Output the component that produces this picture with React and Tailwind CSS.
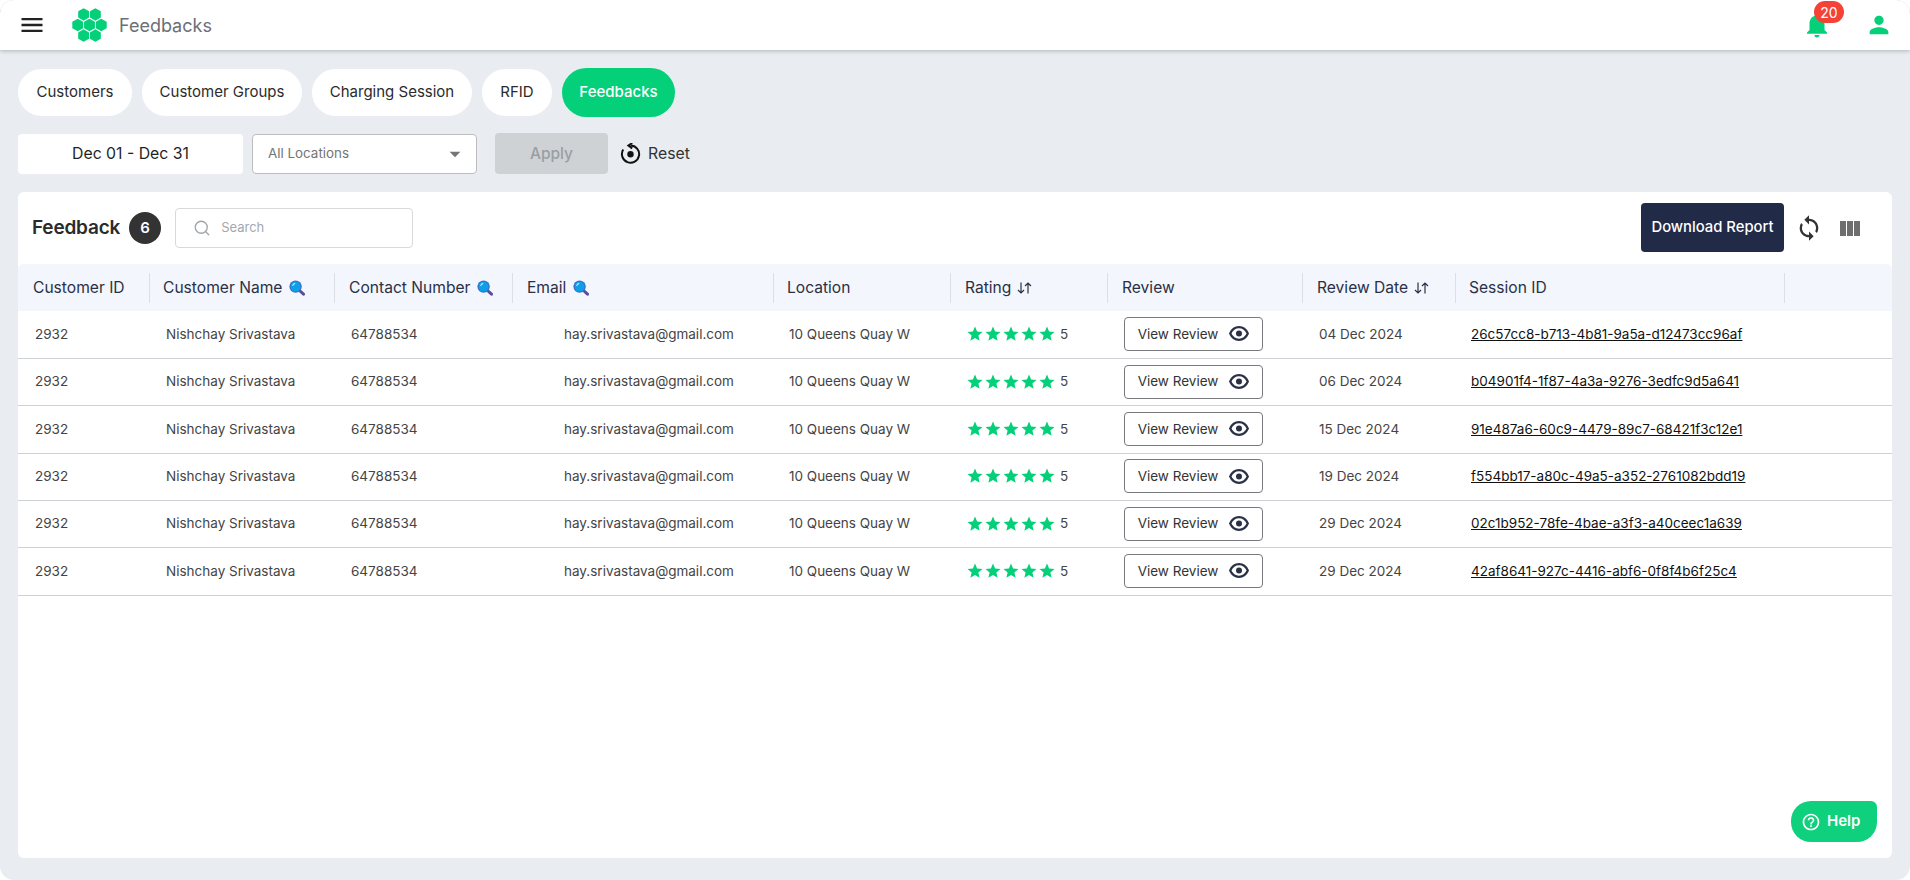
import { Search } from 'lucide-react';
import {
  MdArrowDropDown,
  MdHelpOutline,
  MdMenu,
  MdNotifications,
  MdPerson,
  MdStar,
  MdSync,
} from 'react-icons/md';

const TABS = [
  { label: 'Customers', width: 'w-[114px]' },
  { label: 'Customer Groups', width: 'w-[160px]' },
  { label: 'Charging Session', width: 'w-[160px]' },
  { label: 'RFID', width: 'w-[70px]' },
  { label: 'Feedbacks', width: 'w-[113px]', active: true },
];

const COLUMNS = [
  { label: 'Customer ID', width: 'w-[132px]', pad: 'pl-[15px]' },
  { label: 'Customer Name', width: 'w-[185px]', pad: 'pl-[13px]', search: true },
  { label: 'Contact Number', width: 'w-[178px]', pad: 'pl-[14px]', search: true },
  { label: 'Email', width: 'w-[261px]', pad: 'pl-[14px]', search: true },
  { label: 'Location', width: 'w-[177px]', pad: 'pl-[13px]' },
  { label: 'Rating', width: 'w-[157px]', pad: 'pl-[14px]', sort: true },
  { label: 'Review', width: 'w-[195px]', pad: 'pl-[14px]' },
  { label: 'Review Date', width: 'w-[153px]', pad: 'pl-[14px]', sort: true },
  { label: 'Session ID', width: 'w-[329px]', pad: 'pl-[13px]' },
  { label: '', width: 'w-[107px]', pad: '' },
];

const ROWS = [
  { date: '04 Dec 2024', session: '26c57cc8-b713-4b81-9a5a-d12473cc96af' },
  { date: '06 Dec 2024', session: 'b04901f4-1f87-4a3a-9276-3edfc9d5a641' },
  { date: '15 Dec 2024', session: '91e487a6-60c9-4479-89c7-68421f3c12e1' },
  { date: '19 Dec 2024', session: 'f554bb17-a80c-49a5-a352-2761082bdd19' },
  { date: '29 Dec 2024', session: '02c1b952-78fe-4bae-a3f3-a40ceec1a639' },
  { date: '29 Dec 2024', session: '42af8641-927c-4416-abf6-0f8f4b6f25c4' },
];

const HEX_CENTERS = [
  [11.75, 6.3],
  [23.65, 6.3],
  [5.8, 17],
  [17.7, 17],
  [29.6, 17],
  [11.75, 27.7],
  [23.65, 27.7],
];

const Logo = () => (
  <svg viewBox="0 0 35.4 34" className="w-[35px] h-[34px]" fill="#05d07a">
    {HEX_CENTERS.map(([x, y]) => (
      <polygon
        key={`${x}-${y}`}
        points={`${x},${y - 6.3} ${x + 5.5},${y - 3.2} ${x + 5.5},${y + 3.2} ${x},${y + 6.3} ${x - 5.5},${y + 3.2} ${x - 5.5},${y - 3.2}`}
      />
    ))}
  </svg>
);

// the blue magnifier emoji next to the searchable headers
const SearchEmoji = () => (
  <svg viewBox="0 0 16 16" className="w-[16px] h-[16px] ml-[7px] shrink-0">
    <path d="M10.5 10.5 L14.5 14.2" stroke="#5e4b9c" strokeWidth="3" strokeLinecap="round" />
    <circle cx="6.6" cy="6.6" r="6.2" fill="#3d6fc4" />
    <circle cx="6.6" cy="6.6" r="5" fill="#0f9ee8" />
    <path d="M3.6 6 Q4 3.8 6.2 3.4" stroke="#bfe8ff" strokeWidth="1.1" fill="none" />
  </svg>
);

const SortArrows = () => (
  <svg viewBox="0 0 15 12" className="w-[15px] h-[12px] ml-[6px]" fill="none" stroke="#2a3045" strokeWidth="1.2">
    <path d="M4 0.5 V11 M1 8 L4 11 L7 8" />
    <path d="M11 11.5 V1 M8 4 L11 1 L14 4" />
  </svg>
);

const ResetIcon = () => (
  <svg viewBox="0 0 22 22" className="ml-[12px] w-[22px] h-[22px]" fill="none" stroke="#111" strokeWidth="2">
    <path d="M10.5 2.5 A8.6 8.6 0 1 1 3.2 6.6" />
    <path d="M12.2 0 L8.4 2.6 L12.2 5.4" />
    <circle cx="10.5" cy="11.2" r="3.2" fill="#111" stroke="none" />
  </svg>
);

const EyeIcon = () => (
  <svg viewBox="0 0 20 15" className="ml-[11px] w-[20px] h-[15px]" fill="none" stroke="#2a3045" strokeWidth="2.2">
    <path d="M1.2 7.5 C3 3.4 6.2 1.2 10 1.2 C13.8 1.2 17 3.4 18.8 7.5 C17 11.6 13.8 13.8 10 13.8 C6.2 13.8 3 11.6 1.2 7.5 Z" />
    <circle cx="10" cy="7.5" r="3" fill="#2a3045" stroke="none" />
  </svg>
);

const ColumnsIcon = () => (
  <svg viewBox="0 0 20 15" className="ml-[17px] w-[20px] h-[15px]" fill="#6e6e6e">
    <rect x="0" y="0" width="6" height="15" />
    <rect x="7" y="0" width="6" height="15" />
    <rect x="14" y="0" width="6" height="15" />
  </svg>
);

const Stars = () => (
  <span className="flex items-center">
    {[0, 1, 2, 3, 4].map((i) => (
      <MdStar key={i} className="w-[18px] h-[18px] text-[#05d07a]" />
    ))}
  </span>
);

const App = () => {
  return (
    <div className="w-[1910px] h-[880px] bg-white overflow-hidden font-['Inter',sans-serif]">
      <div className="relative h-full bg-[#e9edf2] rounded-[14px] overflow-hidden">
        <header className="h-[50px] bg-white flex items-center rounded-t-[14px] shadow-[0_1px_4px_rgba(0,0,0,0.25)] pl-[18px] pr-[17px]">
          <MdMenu className="w-[28px] h-[28px] text-[#222]" />
          <span className="ml-[26px]">
            <Logo />
          </span>
          <span className="ml-[12px] text-[18px] text-[#6b6f76]">Feedbacks</span>
          <div className="ml-auto flex items-center">
            <div className="relative">
              <MdNotifications className="w-[30px] h-[30px] text-[#05d07a]" />
              <span className="absolute -top-[9px] left-[12px] w-[30px] h-[22px] rounded-full bg-[#f44336] text-white text-[14px] flex items-center justify-center">
                20
              </span>
            </div>
            <MdPerson className="ml-[33px] w-[28px] h-[28px] text-[#05d07a]" />
          </div>
        </header>

        <main className="pl-[18px] pr-[18px]">
          <nav className="flex items-center gap-[10px] mt-[18px] h-[49px]">
            {TABS.map((tab) => (
              <button
                key={tab.label}
                type="button"
                className={`${tab.width} rounded-full flex items-center justify-center pb-px text-[15px] whitespace-nowrap ${
                  tab.active ? 'h-[49px] bg-[#05d07a] text-white font-medium' : 'h-[47px] bg-white text-[#2b2b2b]'
                }`}
              >
                {tab.label}
              </button>
            ))}
          </nav>

          <div className="flex items-center mt-[16px] h-[41px]">
            <div className="w-[225px] h-[40px] bg-white rounded-[4px] flex items-center justify-center text-[15.8px] text-[#1f1f1f]">
              Dec 01 - Dec 31
            </div>
            <div className="ml-[9px] w-[225px] h-[40px] bg-white border border-[#bdbdbd] rounded-[4px] flex items-center pl-[15px] pr-[8px] text-[13.4px] text-[#757575]">
              All Locations
              <MdArrowDropDown className="ml-auto w-[26px] h-[26px] text-[#757575]" />
            </div>
            <button
              type="button"
              className="ml-[18px] w-[113px] h-[41px] rounded-[4px] bg-[#ced2d5] text-[#9a9ea2] text-[15.5px] font-medium"
            >
              Apply
            </button>
            <ResetIcon />
            <span className="ml-[6px] text-[15.8px] text-[#333]">Reset</span>
          </div>

          <section className="mt-[18px] h-[666px] bg-white rounded-[6px]">
            <div className="h-[72px] flex items-center pl-[14px] pr-[32px]">
              <h2 className="text-[19px] font-semibold text-[#2b2b2b] tracking-[-0.2px]">Feedback</h2>
              <span className="ml-[9px] w-[32px] h-[32px] rounded-full bg-[#333] text-white text-[15px] font-semibold flex items-center justify-center">
                6
              </span>
              <div className="ml-[14px] mb-px w-[238px] h-[40px] border border-[#d9d9d9] rounded-[4px] flex items-center pl-[17px] text-[13px] text-[#a5a8ad]">
                <Search className="w-[18px] h-[18px] text-[#a0a4a8] mr-[10px]" strokeWidth={1.75} />
                Search
              </div>
              <button
                type="button"
                className="ml-auto mb-[2px] w-[143px] h-[49px] rounded-[4px] bg-[#212a47] text-white text-[14.8px] font-medium"
              >
                Download Report
              </button>
              <MdSync className="ml-[11px] w-[28px] h-[28px] text-[#333]" />
              <ColumnsIcon />
            </div>

            <table className="table-fixed w-[1874px] border-collapse text-left">
              <thead>
                <tr className="h-[47px] bg-[#f3f6fd]">
                  {COLUMNS.map((col, i) => (
                    <th key={col.label || i} className={`${col.width} p-0 font-normal first:rounded-tl-[5px] last:rounded-tr-[5px]`}>
                      <div
                        className={`flex items-center h-[30px] text-[15.6px] text-[#2a3045] ${
                          i < 9 ? 'border-r border-[#dcdfe6]' : ''
                        } ${col.pad}`}
                      >
                        {col.label}
                        {col.search && <SearchEmoji />}
                        {col.sort && <SortArrows />}
                      </div>
                    </th>
                  ))}
                </tr>
              </thead>
              <tbody className="text-[13.5px] text-[#444]">
                {ROWS.map((row) => (
                  <tr key={row.session} className="h-[47.35px] border-b border-[#d0d2d8]">
                    <td className="pl-[17px] pb-px">2932</td>
                    <td className="pl-[16px] pb-px">Nishchay Srivastava</td>
                    <td className="pl-[16px] pb-px">64788534</td>
                    <td className="pl-[51px] pb-px">hay.srivastava@gmail.com</td>
                    <td className="pl-[15px] pb-px">10 Queens Quay W</td>
                    <td className="pl-[15px] pb-px">
                      <span className="flex items-center gap-[4px]">
                        <Stars />
                        5
                      </span>
                    </td>
                    <td className="pl-[16px] pb-px">
                      <button
                        type="button"
                        className="w-[139px] h-[34px] border border-[#77797c] rounded-[4px] flex items-center justify-center text-[#333]"
                      >
                        View Review
                        <EyeIcon />
                      </button>
                    </td>
                    <td className="pl-[16px] pb-px">{row.date}</td>
                    <td className="pl-[15px] pb-px">
                      <a href="#session" className="underline text-[#111]">
                        {row.session}
                      </a>
                    </td>
                    <td />
                  </tr>
                ))}
              </tbody>
            </table>
          </section>
        </main>

        <button
          type="button"
          className="absolute left-[1791px] top-[801px] w-[86px] h-[41px] rounded-tl-[20px] rounded-bl-[20px] rounded-tr-[6px] rounded-br-[20px] bg-[#0fd07c] text-white text-[15px] font-semibold flex items-center pl-[10px]"
        >
          <MdHelpOutline className="w-[20px] h-[20px] mr-[6px]" />
          Help
        </button>
      </div>
    </div>
  );
};

export default App;
